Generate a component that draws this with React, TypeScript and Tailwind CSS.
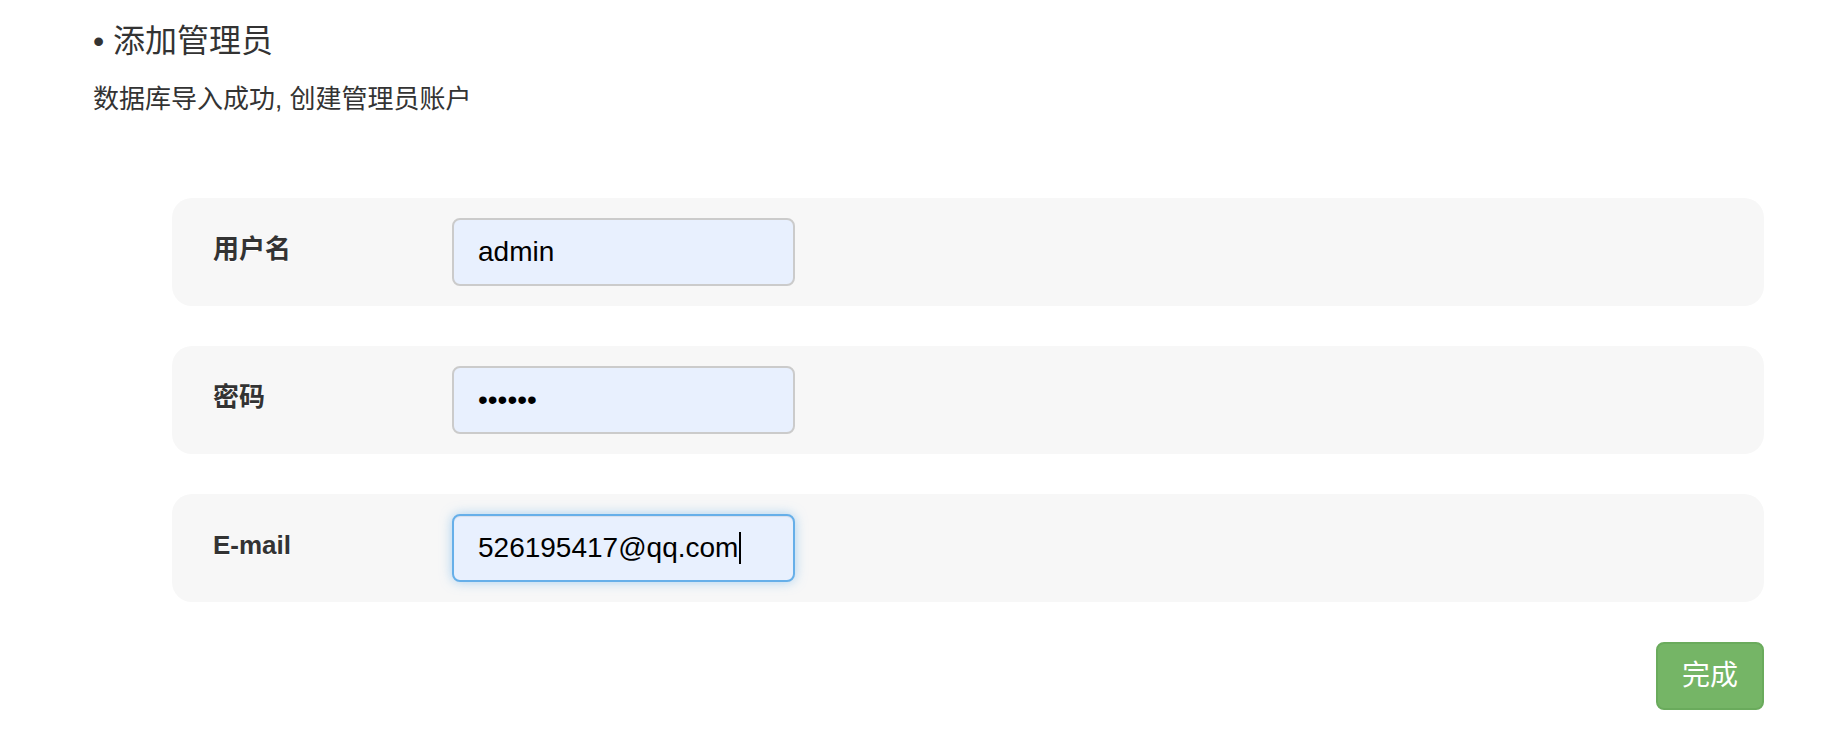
import React from 'react';

const sans = "font-['Liberation_Sans','Noto_Sans_CJK_SC',sans-serif]";

function Row({ label, children }: { label: string; children: React.ReactNode }) {
  return (
    <div className="flex h-[108px] items-center rounded-[20px] bg-[#f7f7f7] pl-[41px]">
      <label className="w-[239px] pb-[6px] text-[26px] font-bold leading-[36px] text-[#333] [text-shadow:0_1px_0_#fff]">
        {label}
      </label>
      {children}
    </div>
  );
}

const inputCls =
  'h-[68px] w-[343px] rounded-[8px] border-2 border-[#cbcbcb] bg-[#e8f0fe] px-[24px] text-[28px] text-black outline-none';

export default function App() {
  return (
    <div className={`${sans} min-h-[744px] bg-white`}>
      {/* Heading */}
      <div className="pl-[93px] pt-[19px] text-[#333]">
        <h2 className="text-[32px] font-normal leading-[44px]">• 添加管理员</h2>
        <p className="mt-[18px] text-[26px] leading-[36px]">数据库导入成功, 创建管理员账户</p>
      </div>

      {/* Form */}
      <div className="ml-[172px] mr-[60px] mt-[81px] flex flex-col gap-[40px]">
        <Row label="用户名">
          <input className={inputCls} defaultValue="admin" readOnly />
        </Row>
        <Row label="密码">
          <input className={inputCls} type="password" defaultValue="123456" readOnly />
        </Row>
        <Row label="E-mail">
          <div className="flex h-[68px] w-[343px] items-center rounded-[8px] border-2 border-[#66afe9] bg-[#e8f0fe] px-[24px] text-[28px] text-black shadow-[inset_0_1px_1px_rgba(0,0,0,0.075),0_0_12px_rgba(102,175,233,0.55)]">
            <span>526195417@qq.com</span>
            <span className="ml-px h-[32px] w-[2px] bg-black" />
          </div>
        </Row>

        <div className="flex justify-end">
          <button className="h-[68px] w-[108px] rounded-[8px] border-2 border-[#6aab5c] bg-[#75b566] text-[28px] text-white">
            完成
          </button>
        </div>
      </div>
    </div>
  );
}
